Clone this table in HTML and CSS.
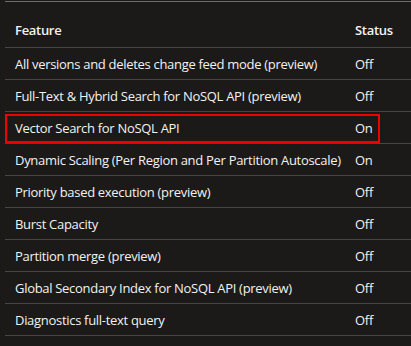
FILE: index.html
```html
<!DOCTYPE html>
<html>
<head>
<meta charset="utf-8">
<link rel="stylesheet" href="styles.css">
</head>
<body>
<div class="panel">
  <div class="table">
    <div class="row head">
      <div class="feature">Feature</div>
      <div class="status">Status</div>
    </div>
    <div class="row"><div class="feature">All versions and deletes change feed mode (preview)</div><div class="status">Off</div></div>
    <div class="row"><div class="feature">Full-Text &amp; Hybrid Search for NoSQL API (preview)</div><div class="status">Off</div></div>
    <div class="row marked"><span class="mark"></span><div class="feature">Vector Search for NoSQL API</div><div class="status">On</div></div>
    <div class="row"><div class="feature">Dynamic Scaling (Per Region and Per Partition Autoscale)</div><div class="status">On</div></div>
    <div class="row"><div class="feature">Priority based execution (preview)</div><div class="status">Off</div></div>
    <div class="row"><div class="feature">Burst Capacity</div><div class="status">Off</div></div>
    <div class="row"><div class="feature">Partition merge (preview)</div><div class="status">Off</div></div>
    <div class="row"><div class="feature">Global Secondary Index for NoSQL API (preview)</div><div class="status">Off</div></div>
    <div class="row"><div class="feature">Diagnostics full-text query</div><div class="status">Off</div></div>
  </div>
</div>
</body>
</html>
```
FILE: styles.css
```css
html, body {
  margin: 0;
  padding: 0;
  background: #1b1a19;
}
.panel {
  width: 411px;
  height: 346px;
  background: #1b1a19;
  padding-left: 5px;
  box-sizing: border-box;
  overflow: hidden;
  font-family: "Open Sans", "Noto Sans", sans-serif;
  font-size: 13px;
  letter-spacing: -0.3px;
  color: #f3f2f1;
}
.table {
  border-top: 1px solid #6e6d6c;
  margin-top: 1px;
}
.row {
  display: flex;
  align-items: center;
  height: 31px;
  border-bottom: 1px solid #484644;
  position: relative;
}
.row.head {
  height: 45px;
  align-items: flex-end;
  font-weight: 600;
}
.row.head > div {
  padding-bottom: 8px;
}
.feature {
  width: 340px;
  padding-left: 10px;
  box-sizing: border-box;
  white-space: nowrap;
}
.status {
  padding-left: 10px;
}
.mark {
  position: absolute;
  left: 0;
  top: 2px;
  width: 375px;
  height: 29px;
  border: 2px solid #f00000;
  box-sizing: border-box;
}
```
